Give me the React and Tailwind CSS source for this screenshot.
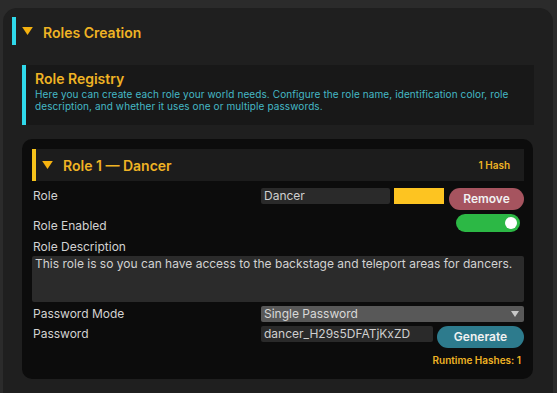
const Triangle = ({ className }) => (
  <svg viewBox="0 0 12 9" className={className}>
    <path d="M0 0 H12 L6 9 Z" fill="currentColor" />
  </svg>
)

const Label = ({ children, className = '' }) => (
  <div className={`w-[228px] text-[12px] leading-[16px] text-[#d2d2d2] ${className}`}>{children}</div>
)

export default function App() {
  return (
    <div className="w-[557px] h-[393px] overflow-hidden bg-[#2b2b2b] pt-2 pl-[3px] pr-[4px] font-['Inter',sans-serif]">
      <div className="h-full rounded-t-[14px] bg-[#1f1f1f] pt-[9px]">
        {/* section header */}
        <div className="flex items-center h-[28px] pl-[9px]">
          <div className="w-1 h-full bg-[#2fd8ea]" />
          <Triangle className="ml-[6px] w-[11px] h-[8px] text-[#f5b20f]" />
          <span className="ml-[10px] mt-[2px] text-[14px] font-semibold text-[#efb324]">Roles Creation</span>
        </div>

        {/* info box */}
        <div className="mt-5 ml-[19px] mr-[19px] flex h-[60px]">
          <div className="w-1 bg-[#2fd8ea]" />
          <div className="flex-1 bg-[#181818] pl-[9px] pt-[5px]">
            <div className="text-[14px] leading-[18px] font-semibold text-[#efb324]">Role Registry</div>
            <p className="text-[10px] leading-[12px] text-[#45b8c6] tracking-[0.1px]">
              Here you can create each role your world needs. Configure the role name, identification color, role description, and whether it uses one or multiple passwords.
            </p>
          </div>
        </div>

        {/* role card */}
        <div className="mt-[14px] ml-[19px] mr-[20px] h-[240px] rounded-[10px] bg-[#0c0c0c] pt-[10px] pl-[10px] pr-[9px]">
          <div className="flex items-center h-[32px] bg-[#1c1c1c]">
            <div className="w-1 h-full bg-[#f5c21b]" />
            <Triangle className="ml-[6px] w-[11px] h-[8px] text-[#f5b20f]" />
            <span className="ml-[10px] mt-[1px] text-[14px] font-semibold text-[#efb324]">Role 1 — Dancer</span>
            <span className="ml-auto mr-[14px] text-[10px] font-semibold text-[#efb324]">1 Hash</span>
          </div>

          <div className="pl-[1px]">
            <div className="flex items-start mt-[7px] h-[22px]">
              <Label>Role</Label>
              <div className="w-[129px] h-4 rounded-[2px] bg-[#2a2a2a] px-[3px] text-[12px] leading-[16px] text-[#cfcfcf]">Dancer</div>
              <div className="ml-[4px] w-[50px] h-4 bg-[#fdc421]" />
              <button className="ml-[5px] w-[75px] h-[22px] rounded-full bg-[#a6545f] text-[12px] font-semibold text-[#f1f1f1]">Remove</button>
            </div>

            <div className="flex items-start mt-[4px] h-[18px]">
              <Label className="mt-[4px]">Role Enabled</Label>
              <div className="ml-auto mr-[4px] w-[64px] h-[18px] rounded-full bg-[#2cb845] flex items-center justify-end pr-[3px]">
                <div className="w-3 h-3 rounded-full bg-white" />
              </div>
            </div>

            <Label className="mt-[7px]">Role Description</Label>
            <div className="mt-[1px] -ml-[1px] h-[46px] rounded-[2px] bg-[#2b2b2b] px-[3px] text-[12px] leading-[16px] text-[#d2d2d2]">
              This role is so you can have access to the backstage and teleport areas for dancers.
            </div>

            <div className="flex items-center mt-[4px] h-4">
              <Label>Password Mode</Label>
              <div className="flex-1 h-4 rounded-[2px] bg-[#585858] flex items-center px-[3px] text-[12px] text-[#d8d8d8]">
                <span>Single Password</span>
                <Triangle className="ml-auto mr-[2px] w-[8px] h-[6px] text-[#c8c8c8]" />
              </div>
            </div>

            <div className="flex items-start mt-[4px] h-[22px]">
              <Label>Password</Label>
              <div className="w-[172px] h-4 rounded-[2px] bg-[#2a2a2a] px-[3px] text-[12px] leading-[16px] text-[#cfcfcf]">dancer_H29s5DFATjKxZD</div>
              <button className="ml-auto w-[87px] h-[22px] rounded-full bg-[#2d7b8d] text-[12px] font-semibold text-[#f1f1f1]">Generate</button>
            </div>

            <div className="mt-[5px] pr-[3px] text-right text-[10px] font-semibold text-[#efb324]">Runtime Hashes: 1</div>
          </div>
        </div>
      </div>
    </div>
  )
}
